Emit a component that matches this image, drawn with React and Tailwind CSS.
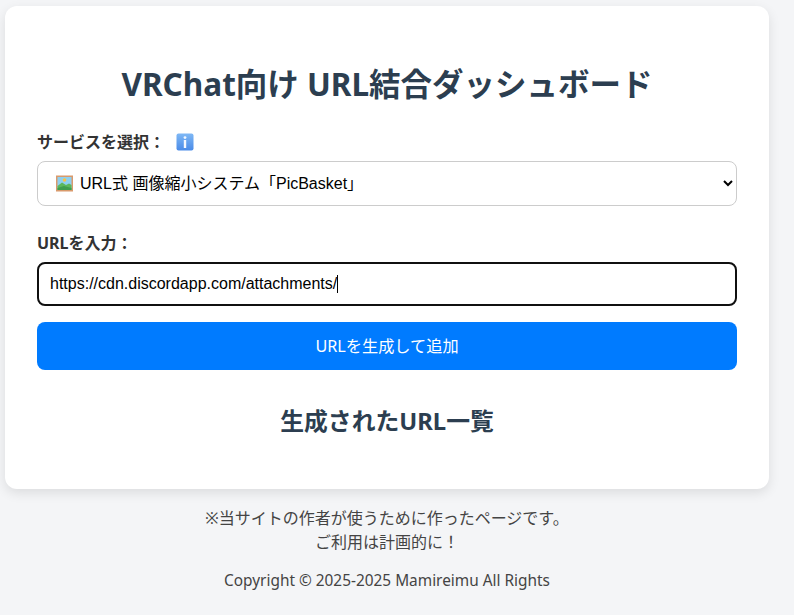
import { useState } from 'react';

const jp = 'font-["Noto_Sans","Noto_Sans_CJK_JP",sans-serif]';

const InfoIcon = () => (
    <svg width="18" height="18" viewBox="0 0 18 18" className="shrink-0">
        <defs>
            <linearGradient id="infoBg" x1="0" y1="0" x2="0" y2="1">
                <stop offset="0" stopColor="#7fb8f5" />
                <stop offset="1" stopColor="#4a8be8" />
            </linearGradient>
        </defs>
        <rect x="0.5" y="0.5" width="17" height="17" rx="2" fill="url(#infoBg)" />
        <circle cx="9" cy="4.6" r="1.4" fill="#f4f8ff" />
        <rect x="7.8" y="7" width="2.4" height="8" fill="#f4f8ff" />
    </svg>
);

const PictureIcon = () => (
    <svg width="17" height="17" viewBox="0 0 17 17">
        <rect x="0" y="0.5" width="17" height="16" fill="#d99a6c" />
        <rect x="1.5" y="2" width="14" height="13" fill="#8fd0f0" />
        <circle cx="8.5" cy="5" r="1.8" fill="#f6c445" />
        <path d="M1.5 11 L6 7.5 L10 10 L13 8.5 L15.5 10 V15 H1.5 Z" fill="#5cb85c" />
        <path d="M1.5 13 L8 11 L15.5 13 V15 H1.5 Z" fill="#3f9e4d" />
    </svg>
);

const App = () => {
    const [url, setUrl] = useState('https://cdn.discordapp.com/attachments/');

    return (
        <div className={`min-h-screen bg-[#f4f5f7] pt-[6px] pl-[5px] ${jp}`}>
            <div className="w-[764px] bg-white rounded-xl shadow-[0_4px_12px_rgba(0,0,0,0.1)] p-8">
                <h1 className="mt-[24px] mb-[24px] text-[31.5px] leading-[44px] font-bold text-center text-[#2c3e50]">
                    VRChat向け URL結合ダッシュボード
                </h1>

                <div className="flex items-center gap-[11px] h-[24px] mb-[7px] font-bold text-[#333]">
                    <label>サービスを選択：</label>
                    <InfoIcon />
                </div>
                <div className="relative mb-[25px]">
                    <select className='block w-full h-[45px] pl-[38px] pr-1 bg-white border border-[#ccc] rounded-lg text-base text-black font-["Liberation_Sans","Noto_Sans_CJK_JP",sans-serif]'>
                        <option>URL式 画像縮小システム「PicBasket」</option>
                    </select>
                    <span className="absolute left-[19px] top-[14px] pointer-events-none">
                        <PictureIcon />
                    </span>
                </div>

                <label className="block h-[24px] mb-[7px] font-bold text-[#333]">URLを入力：</label>
                <div className="relative mb-4">
                    <input
                        type="text"
                        value={url}
                        onChange={(e) => setUrl(e.target.value)}
                        className='block w-full h-[44px] px-[11px] bg-white border-2 border-[#101010] rounded-lg text-base text-black outline-none font-["Liberation_Sans",sans-serif]'
                    />
                    <span className="absolute left-[300px] top-[13px] w-px h-[18px] bg-black" />
                </div>

                <button className="block w-full h-[48px] pt-px bg-[#007bff] rounded-lg text-[16.2px] text-white">
                    URLを生成して追加
                </button>

                <h2 className="mt-[35px] mb-[19px] text-[23.8px] leading-[33px] font-bold text-center text-[#2c3e50]">
                    生成されたURL一覧
                </h2>
            </div>

            <footer className="w-[764px] pt-[17px] text-center text-base leading-[24px] text-[#444]">
                <p>※当サイトの作者が使うために作ったページです。</p>
                <p>ご利用は計画的に！</p>
                <p className="mt-[15px] text-[15.4px]">Copyright © 2025-2025 Mamireimu All Rights</p>
            </footer>
        </div>
    );
};

export default App;
